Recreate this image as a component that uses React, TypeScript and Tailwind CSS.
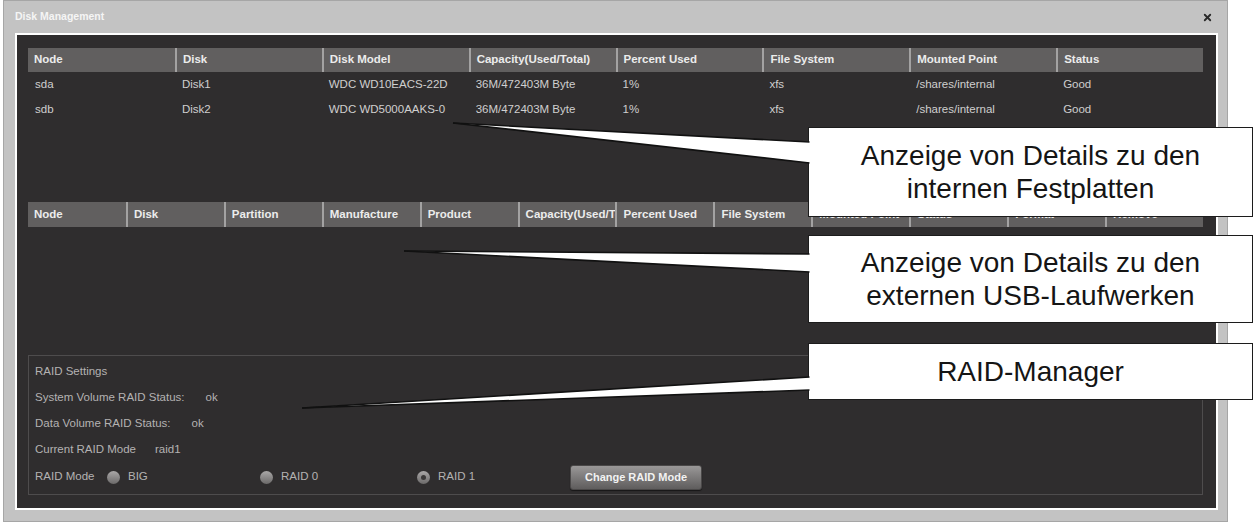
import React from 'react';
import { X } from 'lucide-react';

const diskColumns = [
  'Node',
  'Disk',
  'Disk Model',
  'Capacity(Used/Total)',
  'Percent Used',
  'File System',
  'Mounted Point',
  'Status',
];

const disks = [
  ['sda', 'Disk1', 'WDC WD10EACS-22D', '36M/472403M Byte', '1%', 'xfs', '/shares/internal', 'Good'],
  ['sdb', 'Disk2', 'WDC WD5000AAKS-0', '36M/472403M Byte', '1%', 'xfs', '/shares/internal', 'Good'],
];

const usbColumns = [
  'Node',
  'Disk',
  'Partition',
  'Manufacture',
  'Product',
  'Capacity(Used/Total)',
  'Percent Used',
  'File System',
  'Mounted Point',
  'Status',
  'Format',
  'Remove',
];

// speech-bubble labels laid over the dialog
const callouts = [
  { top: 'top-[127px] h-[90px]', lines: ['Anzeige von Details zu den', 'internen Festplatten'] },
  { top: 'top-[235px] h-[88px]', lines: ['Anzeige von Details zu den', 'externen USB-Laufwerken'] },
  { top: 'top-[343px] h-[57px]', lines: ['RAID-Manager'] },
];

// pointer wedges: tip, upper and lower attach point on the bubble's left edge
const pointers = [
  { tip: [453, 123], y1: 142, y2: 163 },
  { tip: [404, 251], y1: 254, y2: 272 },
  { tip: [302, 408], y1: 377, y2: 390 },
];

const HeaderCell = ({ label, first }: { label: string; first: boolean }) => (
  <div
    className={`h-full flex items-center px-[6px] overflow-hidden whitespace-nowrap font-bold text-[11.5px] text-[#ececec] ${
      first ? '' : 'border-l-2 border-[#a3a2a2]'
    }`}
  >
    {label}
  </div>
);

const Radio = ({ label, checked }: { label: string; checked?: boolean }) => (
  <div className="flex items-center gap-[8px]">
    <span className="w-[13px] h-[13px] rounded-full bg-gradient-to-b from-[#aaa8a8] to-[#6c6a6a] flex items-center justify-center">
      {checked && <span className="w-[5px] h-[5px] rounded-full bg-[#3b3939]" />}
    </span>
    <span>{label}</span>
  </div>
);

const App = () => {
  return (
    <div className="relative w-[1256px] h-[528px] bg-white overflow-hidden font-['Liberation_Sans',Arial,sans-serif]">
      {/* Dialog frame */}
      <div className="ml-[3px] w-[1225px] h-[522px] bg-[#c3c3c3] border border-[#a6a6a6] flex flex-col">
        <div className="h-[32px] flex items-center justify-between pl-[11px] pr-[14px]">
          <span className="text-[10.5px] font-bold text-[#f5f5f5]">Disk Management</span>
          <X size={11} strokeWidth={4} className="text-[#2a2a2a]" />
        </div>

        <div className="ml-[11px] w-[1203px] h-[477px] border-2 border-white bg-[#2f2d2e] flex flex-col pt-[13px] pl-[11px] pr-[13px] pb-[13px]">
          {/* Internal disks */}
          <div className="h-[154px] flex flex-col">
            <div className="h-[24px] grid grid-cols-8 bg-[#615f5f]">
              {diskColumns.map((c, i) => (
                <HeaderCell key={c} label={c} first={i === 0} />
              ))}
            </div>
            {disks.map((row) => (
              <div key={row[0]} className="h-[25px] grid grid-cols-8 text-[11.5px] text-[#cfcfcf]">
                {row.map((v, i) => (
                  <div key={i} className="flex items-center px-[7px] whitespace-nowrap overflow-hidden">
                    {v}
                  </div>
                ))}
              </div>
            ))}
          </div>

          {/* USB drives */}
          <div className="h-[153px] flex flex-col">
            <div className="h-[25px] grid grid-cols-12 bg-[#615f5f]">
              {usbColumns.map((c, i) => (
                <HeaderCell key={c} label={c} first={i === 0} />
              ))}
            </div>
          </div>

          {/* RAID settings */}
          <div className="h-[140px] border border-[#4e4c4d] pt-[3px] pl-[6px] text-[11.5px] text-[#b4b2b2] flex flex-col">
            <div className="h-[26px] flex items-center">RAID Settings</div>
            <div className="h-[26px] flex items-center gap-[21px]">
              <span>System Volume RAID Status:</span>
              <span>ok</span>
            </div>
            <div className="h-[26px] flex items-center gap-[21px]">
              <span>Data Volume RAID Status:</span>
              <span>ok</span>
            </div>
            <div className="h-[26px] flex items-center gap-[19px]">
              <span>Current RAID Mode</span>
              <span>raid1</span>
            </div>
            <div className="h-[28px] flex items-center">
              <span className="w-[72px]">RAID Mode</span>
              <div className="w-[153px]">
                <Radio label="BIG" />
              </div>
              <div className="w-[157px]">
                <Radio label="RAID 0" />
              </div>
              <div className="w-[153px]">
                <Radio label="RAID 1" checked />
              </div>
              <button className="w-[132px] h-[25px] rounded-[3px] border border-[#4a4848] bg-gradient-to-b from-[#9a9898] to-[#5f5d5d] text-[11px] font-bold text-[#f2f2f2] shadow-[0_1px_1px_rgba(0,0,0,0.5)]">
                Change RAID Mode
              </button>
            </div>
          </div>
        </div>
      </div>

      {/* Annotation bubbles */}
      {callouts.map((c, i) => (
        <div
          key={i}
          className={`absolute left-[808px] w-[445px] ${c.top} bg-white border-[1.5px] border-[#1c1c1c] flex flex-col items-center justify-center text-[28px] leading-[33px] text-[#151515] font-['Liberation_Sans',Arial,sans-serif]`}
        >
          {c.lines.map((l) => (
            <span key={l}>{l}</span>
          ))}
        </div>
      ))}

      <svg className="absolute inset-0 pointer-events-none" width={1256} height={528}>
        {pointers.map((p, i) => (
          <g key={i}>
            <polygon points={`${p.tip[0]},${p.tip[1]} 811,${p.y1} 811,${p.y2}`} fill="#fff" />
            <line x1={p.tip[0]} y1={p.tip[1]} x2={809.5} y2={p.y1} stroke="#111" strokeWidth={1.6} />
            <line x1={p.tip[0]} y1={p.tip[1]} x2={809.5} y2={p.y2} stroke="#111" strokeWidth={1.6} />
          </g>
        ))}
      </svg>
    </div>
  );
};

export default App;
